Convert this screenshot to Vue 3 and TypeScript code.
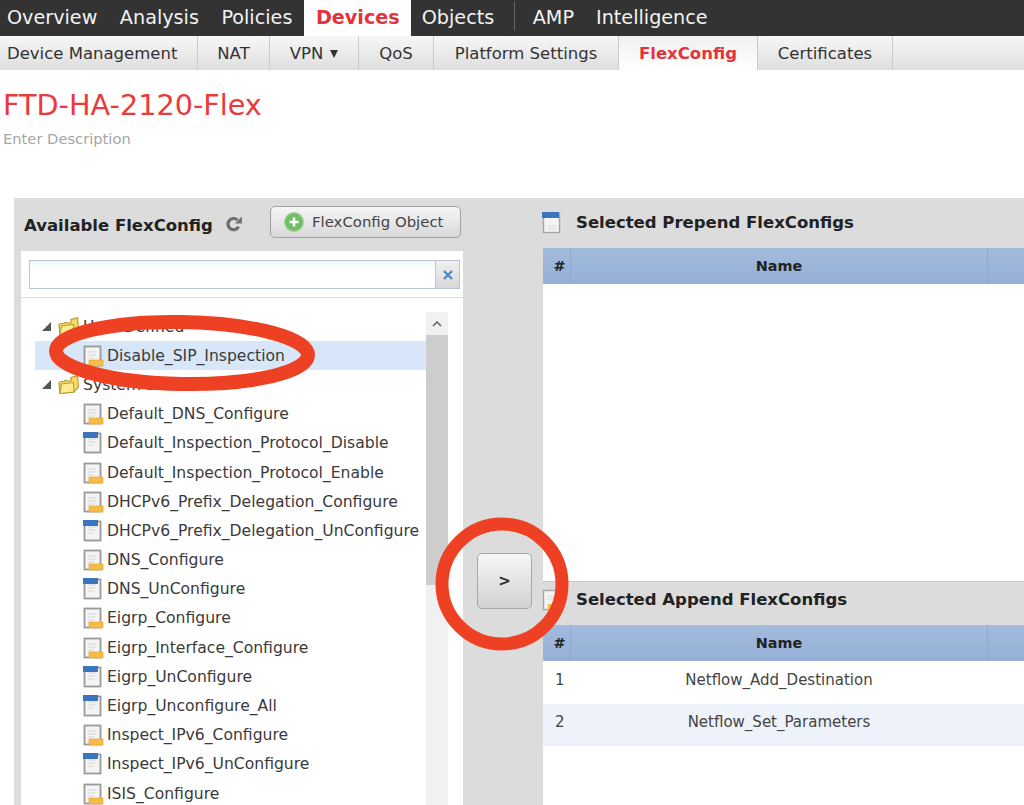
<template>
  <div class="page">
    <nav class="top-nav">
      <a v-for="item in topNav" :key="item.label" class="top-item" :class="{ active: item.active, split: item.split }">{{ item.label }}</a>
    </nav>
    <nav class="sub-nav">
      <a v-for="item in subNav" :key="item.label" class="sub-item" :class="{ active: item.active }" :style="{ width: item.width + 'px' }">
        {{ item.label }}<span v-if="item.caret" class="caret"></span>
      </a>
    </nav>

    <header class="policy-head">
      <h1>FTD-HA-2120-Flex</h1>
      <p>Enter Description</p>
    </header>

    <main class="editor">
      <section class="available">
        <div class="available-head">
          <h2>Available FlexConfig</h2>
          <svg class="refresh" viewBox="0 0 16 16" width="16" height="16">
            <path d="M12.6 10.6A5.6 5.6 0 1 1 11.4 4" fill="none" stroke="#6d6d6d" stroke-width="3.2" />
            <path d="M9 7.4h6.800V.6z" fill="#6d6d6d" />
          </svg>
          <button class="object-btn">
            <svg viewBox="0 0 20 20" width="20" height="20">
              <circle cx="10" cy="10" r="9.400" fill="#6fbf67" stroke="#a5cf9f" stroke-width="1.200" />
              <path d="M10 5.500v9M5.500 10h9" stroke="#fff" stroke-width="2.600" />
            </svg>
            FlexConfig Object
          </button>
        </div>
        <div class="search-box">
          <div class="search">
            <input type="text" />
            <span class="clear">
              <svg viewBox="0 0 12 12" width="12" height="12"><path d="M2 2l8 8M10 2l-8 8" stroke="#4a8ac6" stroke-width="2.400" /></svg>
            </span>
          </div>
        </div>
        <div class="tree-box">
          <div class="tree">
            <template v-for="group in groups" :key="group.name">
              <div class="tree-row group-row">
                <span class="expander"></span>
                <svg class="folder" viewBox="0 0 22 20" width="22" height="20">
                  <path d="M2 18.500 1 7.500l2-1h3l1.500-1L10 6h3V2.500L19.500 .8 20.500 12l-4.500 5z" fill="#f6dc62" stroke="#bd9a34" stroke-width="1.200" />
                  <path d="M2 18.500 3.500 9l12-1.500L16 17z" fill="#fcec90" stroke="#bd9a34" stroke-width="1.100" />
                </svg>
                <span>{{ group.name }}</span>
              </div>
              <div v-for="row in group.items" :key="row.name" class="tree-row item-row" :class="{ current: row.selected }">
                <svg class="doc" viewBox="0 0 22 22" width="22" height="22">
                  <rect x="2.500" y="1.500" width="16" height="19" fill="#f4f4f4" stroke="#9a9a9a" stroke-width="1.800" />
                  <path d="M6 7h8M6 10h8M6 13h6" stroke="#d6d6d6" stroke-width="1" />
                  <rect v-if="row.append" x="1" y="0" width="15" height="6" fill="#3a76be" />
                  <rect v-else x="7" y="15" width="14" height="6" fill="#f7bc45" stroke="#e0a030" stroke-width=".6" />
                </svg>
                <span>{{ row.name }}</span>
              </div>
            </template>
          </div>
          <div class="scrollbar">
            <div class="scroll-up">
              <svg viewBox="0 0 10 6" width="10" height="6"><path d="M1 5l4-4 4 4" fill="none" stroke="#555" stroke-width="1.400" /></svg>
            </div>
            <div class="scroll-thumb"></div>
          </div>
        </div>
      </section>

      <div class="mover">
        <button class="move-btn">&gt;</button>
      </div>

      <section class="chosen">
        <div class="pane pane-top">
          <div class="pane-head">
            <svg class="doc" viewBox="0 0 22 22" width="22" height="22">
              <rect x="2.500" y="1.500" width="16" height="19" fill="#f4f4f4" stroke="#a5a5a5" stroke-width="1.400" />
              <path d="M7 14h8M7 17h8" stroke="#d6d6d6" stroke-width="1" />
              <rect x="1" y="0" width="17" height="6" fill="#3a76be" />
            </svg>
            <h2>Selected Prepend FlexConfigs</h2>
          </div>
          <div class="table-head">
            <div class="col-num">#</div>
            <div class="col-name">Name</div>
            <div class="col-rest"></div>
          </div>
          <div class="table-body"></div>
        </div>
        <div class="pane pane-bottom">
          <div class="pane-head">
            <svg class="doc" viewBox="0 0 22 22" width="22" height="22">
              <rect x="2.500" y="1.500" width="16" height="19" fill="#f4f4f4" stroke="#a5a5a5" stroke-width="1.400" />
              <path d="M6 7h8M6 10h8" stroke="#d6d6d6" stroke-width="1" />
              <rect x="7" y="15" width="14" height="6" fill="#f7bc45" />
            </svg>
            <h2>Selected Append FlexConfigs</h2>
          </div>
          <div class="table-head">
            <div class="col-num">#</div>
            <div class="col-name">Name</div>
            <div class="col-rest"></div>
          </div>
          <div class="table-body">
            <div v-for="(name, i) in appended" :key="name" class="table-row" :class="{ odd: i % 2 === 1 }">
              <div class="col-num">{{ i + 1 }}</div>
              <div class="col-name">{{ name }}</div>
            </div>
          </div>
        </div>
      </section>
    </main>

    <!-- red annotation marks drawn over the screenshot -->
    <svg class="mark mark-ellipse" viewBox="0 0 270 82" width="270" height="82">
      <ellipse cx="135" cy="40" rx="126" ry="31" transform="rotate(1 135 40)" fill="none" stroke="#ee4124" stroke-width="14" />
    </svg>
    <svg class="mark mark-circle" viewBox="0 0 136 136" width="136" height="136">
      <circle cx="68" cy="68" r="60" fill="none" stroke="#ee4124" stroke-width="13" />
    </svg>
  </div>
</template>

<script setup lang="ts">
interface NavItem {
  label: string
  active?: boolean
  split?: boolean
}

interface SubItem {
  label: string
  width: number
  active?: boolean
  caret?: boolean
}

interface TreeItem {
  name: string
  append?: boolean
  selected?: boolean
}

interface TreeGroup {
  name: string
  items: TreeItem[]
}

const topNav: NavItem[] = [
  { label: 'Overview' },
  { label: 'Analysis' },
  { label: 'Policies' },
  { label: 'Devices', active: true },
  { label: 'Objects' },
  { label: 'AMP', split: true },
  { label: 'Intelligence' }
]

const subNav: SubItem[] = [
  { label: 'Device Management', width: 198 },
  { label: 'NAT', width: 72 },
  { label: 'VPN', width: 89, caret: true },
  { label: 'QoS', width: 75 },
  { label: 'Platform Settings', width: 185 },
  { label: 'FlexConfig', width: 139, active: true },
  { label: 'Certificates', width: 135 }
]

const groups: TreeGroup[] = [
  {
    name: 'User Defined',
    items: [{ name: 'Disable_SIP_Inspection', selected: true }]
  },
  {
    name: 'System Defined',
    items: [
      { name: 'Default_DNS_Configure' },
      { name: 'Default_Inspection_Protocol_Disable', append: true },
      { name: 'Default_Inspection_Protocol_Enable' },
      { name: 'DHCPv6_Prefix_Delegation_Configure' },
      { name: 'DHCPv6_Prefix_Delegation_UnConfigure', append: true },
      { name: 'DNS_Configure' },
      { name: 'DNS_UnConfigure', append: true },
      { name: 'Eigrp_Configure' },
      { name: 'Eigrp_Interface_Configure' },
      { name: 'Eigrp_UnConfigure', append: true },
      { name: 'Eigrp_Unconfigure_All', append: true },
      { name: 'Inspect_IPv6_Configure' },
      { name: 'Inspect_IPv6_UnConfigure', append: true },
      { name: 'ISIS_Configure' }
    ]
  }
]

const appended: string[] = ['Netflow_Add_Destination', 'Netflow_Set_Parameters']
</script>

<style scoped>
.page {
  position: relative;
  width: 1024px;
  height: 805px;
  overflow: hidden;
  background: #fff;
  font-family: "DejaVu Sans", Verdana, sans-serif;
  color: #333;
}

/* top nav */
.top-nav {
  display: flex;
  height: 36px;
  padding-left: 7px;
  background: #333;
}

.top-item {
  margin-right: 22.500px;
  color: #f2f2f2;
  font-size: 19.200px;
  line-height: 35px;
}

.top-item.active {
  margin: 0 11px 0 -11px;
  padding: 0 11px 0 12px;
  background: #fff;
  color: #e5323b;
  font-weight: bold;
}

.top-item.split {
  position: relative;
  margin-left: 16px;
  margin-right: 22px;
}

.top-item.split::before {
  content: "";
  position: absolute;
  left: -19px;
  top: 2px;
  height: 28px;
  width: 1px;
  background: #666;
}

/* sub nav */
.sub-nav {
  display: flex;
  height: 34px;
  background: linear-gradient(#f7f7f7, #dedede);
}

.sub-item {
  box-sizing: border-box;
  border-right: 1px solid #cbcbcb;
  color: #333;
  font-size: 16.500px;
  line-height: 36px;
  text-align: center;
  white-space: nowrap;
}

.sub-item:first-child {
  padding-left: 7px;
  text-align: left;
}

.sub-item.active {
  background: linear-gradient(#f0f0f0, #fff);
  color: #e5323b;
  font-weight: bold;
}

.caret {
  display: inline-block;
  margin-left: 7px;
  border-left: 4.500px solid transparent;
  border-right: 4.500px solid transparent;
  border-top: 8px solid #333;
  vertical-align: 1px;
}

/* heading */
.policy-head {
  height: 128px;
  padding-left: 3px;
}

.policy-head h1 {
  margin: 0;
  padding-top: 17px;
  color: #ea3a3c;
  font-size: 28.700px;
  font-weight: normal;
  line-height: 36px;
}

.policy-head p {
  margin: 7px 0 0;
  color: #a6a6a6;
  font-size: 14.700px;
  line-height: 18px;
}

/* editor */
.editor {
  display: flex;
  height: 607px;
  margin-left: 14px;
  background: #dcdcdc;
}

.available {
  width: 449px;
  padding-left: 7px;
  box-sizing: border-box;
}

.available-head {
  display: flex;
  align-items: flex-start;
  height: 53px;
}

.available-head h2,
.pane-head h2 {
  margin: 0;
  color: #222;
  font-size: 16.500px;
  font-weight: bold;
}

.available-head h2 {
  width: 189px;
  padding: 18px 0 0 3px;
  line-height: 20px;
  white-space: nowrap;
}

.refresh {
  margin: 18px 0 0 13px;
}

.object-btn {
  display: flex;
  align-items: center;
  gap: 8px;
  box-sizing: border-box;
  width: 191px;
  height: 32px;
  margin: 8px 0 0 28px;
  padding: 0 0 0 13px;
  border: 1px solid #a0a0a0;
  border-radius: 5px;
  background: linear-gradient(#f6f6f6, #d8d8d8);
  color: #444;
  font-family: inherit;
  font-size: 14.900px;
}

.search-box {
  box-sizing: border-box;
  width: 442px;
  height: 46px;
  padding: 9px 0 0 8px;
  background: #fff;
}

.search {
  display: flex;
  box-sizing: border-box;
  width: 431px;
  height: 29px;
  border: 1px solid #bcc3d8;
}

.search input {
  flex: 1;
  min-width: 0;
  border: 0;
  outline: 0;
  background: linear-gradient(#f2f6fa, #fff 40%);
}

.clear {
  display: flex;
  align-items: center;
  justify-content: center;
  width: 23px;
  border-left: 1px solid #c4c4c4;
  background: linear-gradient(#f0f0f0, #d8d8d8);
}

.tree-box {
  display: flex;
  width: 442px;
  height: 507px;
  margin-top: 1px;
  padding: 14px 15px 0 14px;
  box-sizing: border-box;
  background: #fff;
}

.tree {
  width: 391px;
  flex: none;
}

.tree-row {
  display: flex;
  align-items: center;
  height: 29.200px;
  font-size: 15.600px;
  color: #3a3a3a;
  white-space: nowrap;
}

.group-row {
  padding-left: 7px;
}

.item-row {
  padding-left: 47px;
}

.item-row span {
  margin-left: 3px;
}

.tree-row.current {
  background: #d7e6f8;
}

.expander {
  width: 0;
  height: 0;
  margin-right: 7px;
  border-left: 9px solid transparent;
  border-bottom: 9px solid #555;
}

.folder {
  margin-right: 3px;
}

.scrollbar {
  display: flex;
  flex-direction: column;
  width: 22px;
  height: 493px;
  background: #f1f1f1;
}

.scroll-up {
  display: flex;
  align-items: center;
  justify-content: center;
  height: 23px;
}

.scroll-thumb {
  height: 250px;
  background: #cdcdcd;
}

/* move button */
.mover {
  width: 80px;
  padding-top: 355px;
  box-sizing: border-box;
}

.move-btn {
  display: block;
  box-sizing: border-box;
  width: 55px;
  height: 56px;
  margin-left: 14px;
  border: 1px solid #a8a8a8;
  border-radius: 5px;
  background: linear-gradient(#f6f6f6, #d2d2d2);
  color: #333;
  font-family: inherit;
  font-size: 15px;
  font-weight: bold;
}

/* selected lists */
.chosen {
  flex: 1;
  display: flex;
  flex-direction: column;
  min-width: 0;
}

.pane-top {
  height: 383px;
  display: flex;
  flex-direction: column;
}

.pane-bottom {
  flex: 1;
  display: flex;
  flex-direction: column;
  border-top: 1px solid #c9c9c9;
}

.pane-head {
  display: flex;
  align-items: center;
  gap: 13px;
  box-sizing: border-box;
  height: 50px;
}

.pane-head .doc {
  margin-left: -2px;
}

.pane-head h2 {
  line-height: 20px;
}

.pane-bottom .pane-head {
  height: 43px;
  padding-bottom: 8px;
}

.table-head {
  display: flex;
  height: 36px;
  background: linear-gradient(#a3bbdc, #95afd7);
  color: #222;
  font-size: 14.400px;
  font-weight: bold;
  line-height: 36px;
  text-align: center;
}

.col-num {
  box-sizing: border-box;
  width: 28px;
  flex: none;
  padding-left: 6px;
  text-align: center;
}

.table-head .col-num {
  border-right: 1px solid #8ea8cf;
}

.col-name {
  width: 416px;
  flex: none;
  text-align: center;
}

.col-rest {
  flex: 1;
  border-left: 1px solid #8ea8cf;
}

.table-body {
  flex: 1;
  background: #fff;
}

.table-row {
  display: flex;
  height: 43px;
  color: #444;
  font-size: 15px;
  line-height: 38px;
}

.table-row .col-num {
  padding-left: 12px;
  text-align: left;
}

.table-row.odd {
  height: 42px;
  background: #eef2fa;
  line-height: 36px;
}

/* annotations */
.mark {
  position: absolute;
  pointer-events: none;
}

.mark-ellipse {
  left: 47px;
  top: 313px;
}

.mark-circle {
  left: 434px;
  top: 516px;
}
</style>

<style>
html,
body {
  margin: 0;
  overflow: hidden;
}
</style>
